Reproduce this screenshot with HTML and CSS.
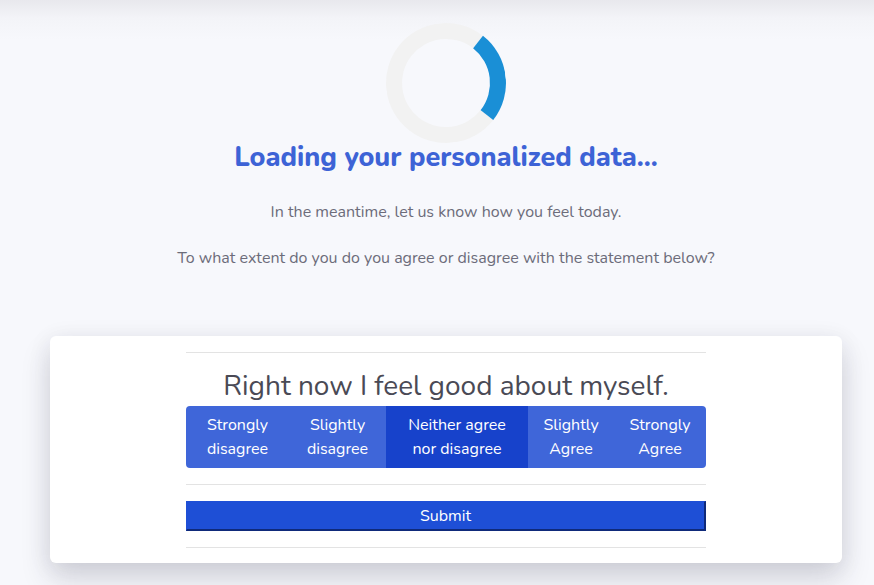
FILE: index.html
```html
<!DOCTYPE html>
<html>
<head>
<meta charset="utf-8">
<link rel="stylesheet" href="styles.css">
</head>
<body>
<div class="page">
  <div class="intro">
    <div class="spinner"></div>
    <h1 class="title">Loading your personalized data...</h1>
    <p class="lead">In the meantime, let us know how you feel today.</p>
    <p class="lead">To what extent do you do you agree or disagree with the statement below?</p>
  </div>
  <div class="card">
    <div class="inner">
      <hr class="rule">
      <h2 class="statement">Right now I feel good about myself.</h2>
      <div class="scale">
        <div class="opt">Strongly<br>disagree</div>
        <div class="opt">Slightly<br>disagree</div>
        <div class="opt selected">Neither agree<br>nor disagree</div>
        <div class="opt">Slightly<br>Agree</div>
        <div class="opt">Strongly<br>Agree</div>
      </div>
      <hr class="rule rule-mid">
      <button class="submit">Submit</button>
      <hr class="rule rule-bottom">
    </div>
  </div>
</div>
</body>
</html>
```

FILE: styles.css
```css
html, body {
  margin: 0;
  padding: 0;
}
body {
  background: linear-gradient(to bottom, #e8e8ed 0px, #f3f4f8 18px, #f7f8fc 40px);
  font-family: "Nunito", Lato, "Open Sans", sans-serif;
  height: 585px;
  overflow: hidden;
}
.page {
  padding: 0 32px 0 50px;
}
.intro {
  display: flex;
  flex-direction: column;
  align-items: center;
  padding-top: 23px;
}
.spinner {
  width: 120px;
  height: 120px;
  box-sizing: border-box;
  border-radius: 50%;
  border: 16px solid #f2f2f2;
  border-right-color: #1a8fd6;
  transform: rotate(-7deg);
}
.title {
  margin: 0;
  font-size: 27px;
  line-height: 30px;
  font-weight: 800;
  color: #3d63d6;
}
.lead {
  margin: 0;
  font-size: 16px;
  line-height: 20px;
  color: #6c6c7a;
}
.lead:first-of-type {
  margin-top: 29px;
}
.lead + .lead {
  margin-top: 26px;
}
.card {
  margin-top: 68px;
  background: #fff;
  border-radius: 6px;
  box-shadow: 0 16px 30px rgba(40, 40, 60, 0.16), 0 4px 24px rgba(40, 40, 70, 0.08);
  padding: 16px 0 15px;
}
.inner {
  width: 520px;
  margin: 0 auto;
}
.rule {
  border: 0;
  border-top: 1px solid #e3e3e3;
  margin: 0;
}
.statement {
  margin: 16px 0 0;
  text-align: center;
  font-size: 28px;
  line-height: 34px;
  font-weight: 400;
  color: #4a4a55;
}
.scale {
  display: grid;
  grid-template-columns: 103px 97px 142px 86px 92px;
  background: #3f66d9;
  border-radius: 4px;
  overflow: hidden;
  margin-top: 3px;
}
.opt {
  color: #fff;
  font-size: 16px;
  line-height: 24px;
  padding: 7px 0;
  text-align: center;
}
.opt.selected {
  background: #1742cb;
}
.rule-mid {
  margin-top: 16px;
}
.submit {
  display: block;
  width: 100%;
  margin-top: 16px;
  height: 30px;
  background: #1e4fd6;
  color: #fff;
  font-family: inherit;
  font-size: 16px;
  border-style: solid;
  border-width: 1px 2px 2px 1px;
  border-color: #1e4fd6 #0f2a7a #0f2a7a #1e4fd6;
  padding: 0;
}
.rule-bottom {
  margin-top: 16px;
}
```
